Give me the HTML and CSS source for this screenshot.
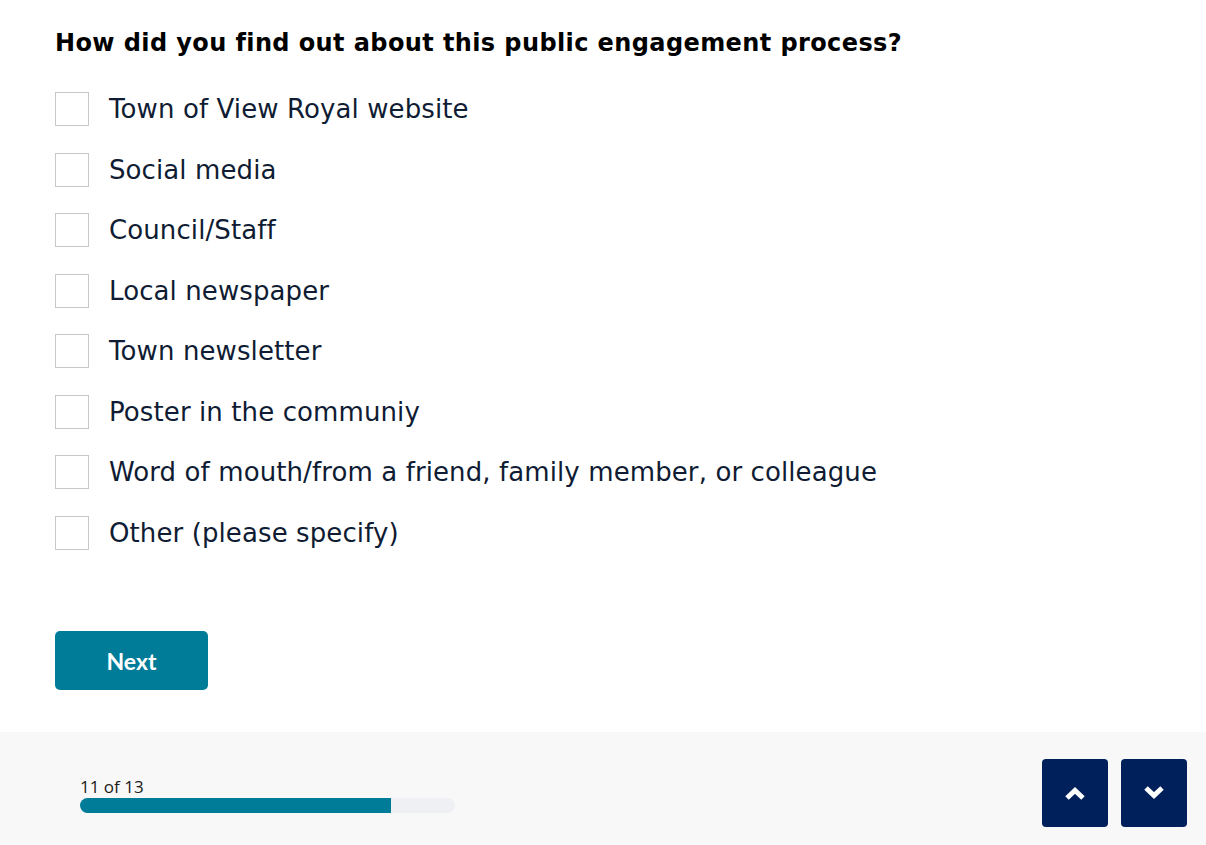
FILE: index.html
```html
<!DOCTYPE html>
<html>
<head>
<meta charset="utf-8">
<link rel="stylesheet" href="styles.css">
</head>
<body>
<main class="content">
  <h1 class="question">How did you find out about this public engagement process?</h1>
  <ul class="options">
    <li class="option"><span class="box"></span><span class="label">Town of View Royal website</span></li>
    <li class="option"><span class="box"></span><span class="label">Social media</span></li>
    <li class="option"><span class="box"></span><span class="label">Council/Staff</span></li>
    <li class="option"><span class="box"></span><span class="label">Local newspaper</span></li>
    <li class="option"><span class="box"></span><span class="label">Town newsletter</span></li>
    <li class="option"><span class="box"></span><span class="label">Poster in the communiy</span></li>
    <li class="option"><span class="box"></span><span class="label">Word of mouth/from a friend, family member, or colleague</span></li>
    <li class="option"><span class="box"></span><span class="label">Other (please specify)</span></li>
  </ul>
  <button class="next">Next</button>
</main>
<footer class="footer">
  <div class="progress">
    <div class="count">11 of 13</div>
    <div class="track"><div class="fill" style="width:83%"></div></div>
  </div>
  <div class="navs">
    <button class="nav"><svg width="24" height="16" viewBox="0 0 24 16"><path d="M4 13 L12 5.5 L20 13" fill="none" stroke="#fff" stroke-width="5" stroke-linecap="butt" stroke-linejoin="miter"/></svg></button>
    <button class="nav"><svg width="24" height="16" viewBox="0 0 24 16"><path d="M4 3 L12 10.5 L20 3" fill="none" stroke="#fff" stroke-width="5" stroke-linecap="butt" stroke-linejoin="miter"/></svg></button>
  </div>
</footer>
</body>
</html>
```
FILE: styles.css
```css
* { box-sizing: border-box; }
html, body { margin: 0; padding: 0; background: #fff; }
body { width: 1206px; height: 845px; overflow: hidden; font-family: "DejaVu Sans", "Open Sans", sans-serif; color: #0f1c33; }
.content { padding: 27px 0 0 55px; height: 732px; }
.question { margin: 0; font-size: 24px; font-weight: 700; color: #000; letter-spacing: 0.4px; line-height: 32px; }
.options { list-style: none; margin: 20px 0 0 0; padding: 0; }
.option { display: flex; align-items: center; height: 60.5px; }
.box { width: 34px; height: 34px; border: 1px solid #c8c8c8; background: #fff; flex: none; }
.label { margin-left: 20px; font-size: 26px; color: #0f1c33; letter-spacing: 0.1px; }
.next { margin-top: 68px; width: 153px; height: 59px; border: none; border-radius: 5px; background: #007c99; color: #fff; font-family: Lato, "Liberation Sans", sans-serif; font-weight: 700; font-size: 23px; }
.footer { height: 113px; background: #f8f8f8; display: flex; justify-content: space-between; align-items: flex-start; padding: 0 19px 0 80px; }
.progress { width: 375px; padding-top: 44px; }
.count { font-family: "Open Sans", "Liberation Sans", sans-serif; font-size: 17px; color: #1a1a1a; line-height: 22px; }
.track { height: 15px; background: #eef0f3; border-radius: 8px; overflow: hidden; }
.fill { height: 100%; background: #007c99; }
.navs { display: flex; gap: 13px; padding-top: 27px; }
.nav { width: 66px; height: 68px; border: none; border-radius: 4px; background: #00205b; display: flex; align-items: center; justify-content: center; padding: 0; }
```
